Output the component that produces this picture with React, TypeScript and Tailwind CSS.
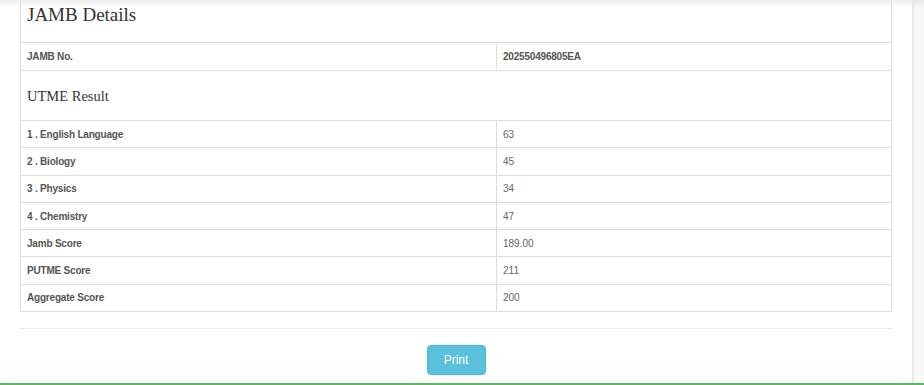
const rows: [string, string][] = [
  ["1 . English Language", "63"],
  ["2 . Biology", "45"],
  ["3 . Physics", "34"],
  ["4 . Chemistry", "47"],
  ["Jamb Score", "189.00"],
  ["PUTME Score", "211"],
  ["Aggregate Score", "200"],
];

function Row({ label, value }: { label: string; value: string }) {
  return (
    <div className="flex h-[27.3px] border-b border-[#dddddd] text-[10px]">
      <div className="w-[476px] border-r border-[#dddddd] px-[6px] flex items-center font-bold tracking-[-0.2px] text-[#555]">
        {label}
      </div>
      <div className="flex-1 px-[6px] flex items-center text-[#666]">{value}</div>
    </div>
  );
}

export default function App() {
  return (
    <div
      className="w-[924px] h-[385px] flex flex-col bg-[#f8f8f8] shadow-[inset_0_8px_8px_-6px_rgba(0,0,0,0.1)]"
      style={{ fontFamily: '"Liberation Sans", Arial, sans-serif' }}
    >
      <div className="flex-1 flex">
        <div className="w-[913px] bg-white border-r border-[#e6e6e6] shadow-[inset_0_8px_8px_-6px_rgba(0,0,0,0.1),1px_0_2px_rgba(0,0,0,0.05)] px-5">
          <div className="border-x border-[#dddddd]">
            <div
              className="h-[43px] border-b border-[#dddddd] px-[6px] pt-[4px] text-[19px] leading-[22px] text-[#333]"
              style={{ fontFamily: '"Liberation Serif", "Times New Roman", serif' }}
            >
              JAMB Details
            </div>
            <div className="flex h-[28px] border-b border-[#dddddd] text-[10px] text-[#555] font-bold tracking-[-0.2px]">
              <div className="w-[476px] border-r border-[#dddddd] px-[6px] flex items-center">JAMB No.</div>
              <div className="flex-1 px-[6px] flex items-center">202550496805EA</div>
            </div>
            <div
              className="h-[50px] border-b border-[#dddddd] px-[6px] flex items-center text-[14.5px] leading-[20px] text-[#333]"
              style={{ fontFamily: '"Liberation Serif", "Times New Roman", serif' }}
            >
              UTME Result
            </div>
            {rows.map(([label, value]) => (
              <Row key={label} label={label} value={value} />
            ))}
          </div>
          <div className="mt-4 border-t border-[#eeeeee]" />
          <div className="mt-4 flex justify-center">
            <button className="w-[59px] h-[30px] rounded-[4px] bg-[#5bc0de] border border-[#46b8da] text-white text-[12px]">
              Print
            </button>
          </div>
        </div>
      </div>
      <div className="h-[2px] bg-[#5cb85c]" />
    </div>
  );
}
